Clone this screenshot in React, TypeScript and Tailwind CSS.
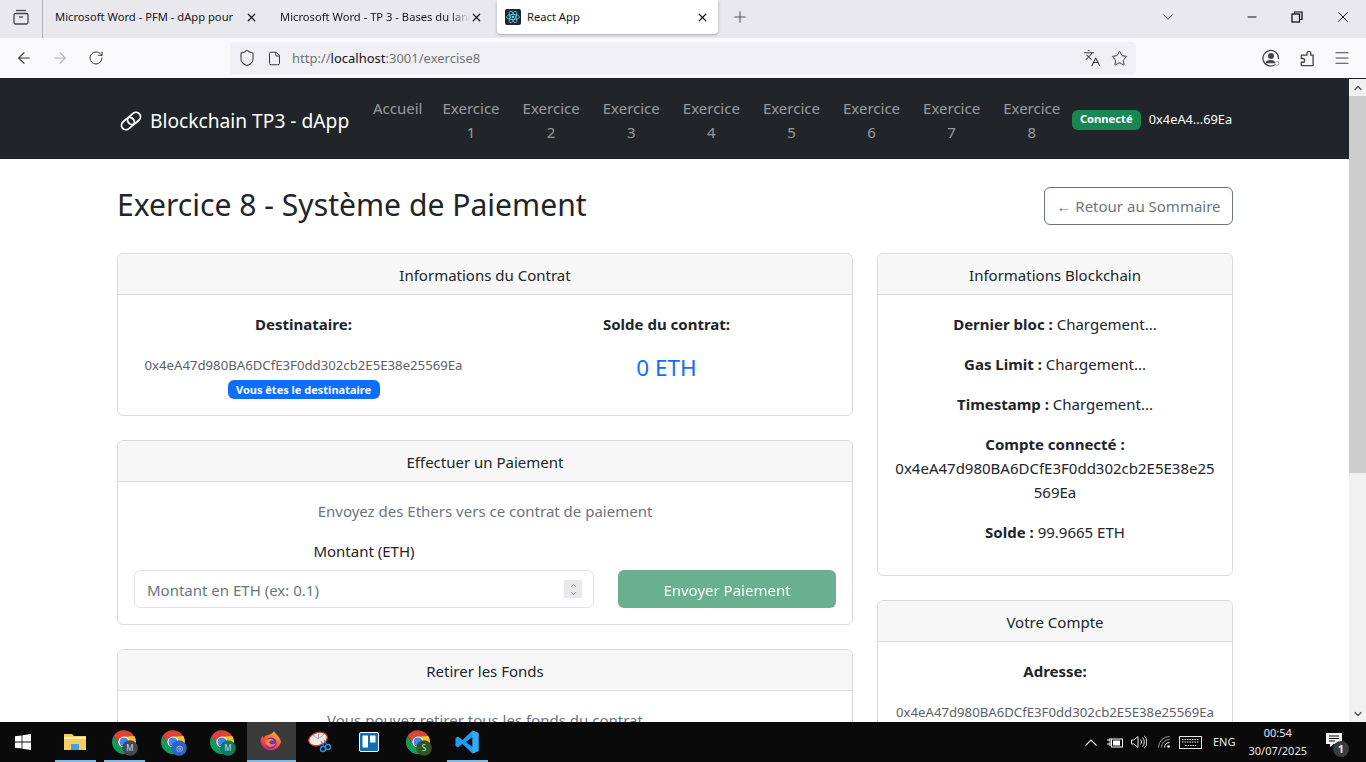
import React from "react";
import { ArrowLeft, ArrowRight, RotateCw, Shield, File, Languages, Star, Menu, X, Plus, ChevronDown, ChevronUp, Minus } from "lucide-react";

const font = "font-['Noto_Sans','Open_Sans',sans-serif]";

function BrowserTab({ title, fade }: { title: string; fade?: boolean }) {
  return (
    <div className="w-[225px] pl-[12px] pr-[10px] pb-[4px] flex items-center justify-between">
      <div className={`w-[190px] overflow-hidden whitespace-nowrap text-[11.2px] text-[#15141a] ${fade ? "[mask-image:linear-gradient(to_right,black_90%,transparent)]" : ""}`}>{title}</div>
      <X className="size-[13px] text-[#15141a] shrink-0" strokeWidth={2.2} />
    </div>
  );
}

function ReactFavicon() {
  return (
    <svg viewBox="0 0 16 16" className="size-4 shrink-0">
      <rect width="16" height="16" rx="2" fill="#20232a" />
      <g fill="none" stroke="#61dafb" strokeWidth="0.8">
        <ellipse cx="8" cy="8" rx="6.4" ry="2.6" />
        <ellipse cx="8" cy="8" rx="6.4" ry="2.6" transform="rotate(60 8 8)" />
        <ellipse cx="8" cy="8" rx="6.4" ry="2.6" transform="rotate(120 8 8)" />
      </g>
      <circle cx="8" cy="8" r="1.3" fill="#61dafb" />
    </svg>
  );
}

function BrowserChrome() {
  return (
    <div className="shrink-0">
      <div className="h-[38px] bg-[#e9e9ed] flex items-stretch">
        <div className="w-[43px] flex items-center justify-center border-r border-[#b0b0b4] pb-[4px]">
          <svg viewBox="0 0 16 16" className="size-4" fill="none" stroke="#45454a" strokeWidth="1.3">
            <path d="M3 1.500h10" />
            <rect x="1" y="4.500" width="14" height="10.500" rx="1.500" />
            <path d="M6 8h4" />
          </svg>
        </div>
        <BrowserTab title="Microsoft Word - PFM - dApp pour" />
        <BrowserTab title="Microsoft Word - TP 3 - Bases du langage" fade />
        <div className="w-[221px] ml-[4px] mb-[4px] bg-white rounded-b-[4px] shadow-[0_1px_3px_rgba(0,0,0,0.3)] flex items-center pl-[8px] pr-[9px]">
          <ReactFavicon />
          <span className="ml-[6px] text-[11.2px] text-[#15141a] flex-1">React App</span>
          <X className="size-[13px] text-[#15141a]" strokeWidth={2.2} />
        </div>
        <div className="w-[44px] pb-[4px] flex items-center justify-center">
          <Plus className="size-[18px] text-[#55555a]" strokeWidth={1.4} />
        </div>
        <div className="flex-1 flex items-center justify-end pb-[4px]">
          <ChevronDown className="size-[18px] text-[#45454a] mr-[52px]" strokeWidth={1.3} />
          <div className="w-[45px] flex justify-center"><Minus className="size-[14px] text-black" strokeWidth={1.6} /></div>
          <div className="w-[46px] flex justify-center">
            <svg viewBox="0 0 12 12" className="size-3" fill="none" stroke="#000" strokeWidth="1.2">
              <rect x="1" y="3" width="7.500" height="8" />
              <path d="M3.500 3V1H11V8.500H8.500" />
            </svg>
          </div>
          <div className="w-[46px] flex justify-center"><X className="size-[18px] text-black" strokeWidth={1.2} /></div>
        </div>
      </div>
      <div className="h-[40px] bg-[#f9f9fb] flex items-center border-b border-b-[#1f1f1f] box-content">
        <div className="w-[230px] flex items-center pl-[15px] gap-[18px] shrink-0">
          <ArrowLeft className="size-[18px] text-[#3a3a40]" strokeWidth={1.5} />
          <ArrowRight className="size-[18px] text-[#b4b4b8]" strokeWidth={1.5} />
          <RotateCw className="size-[16px] ml-[1px] text-[#3a3a40]" strokeWidth={1.5} />
        </div>
        <div className="w-[906px] h-[32px] rounded-[4px] bg-[#f0f0f4] flex items-center pl-[8px] pr-[8px] shrink-0">
          <Shield className="size-[18px] text-[#3a3a40]" strokeWidth={1.4} />
          <File className="size-[15px] ml-[11px] text-[#3a3a40]" strokeWidth={1.6} />
          <span className="ml-[10px] pt-[2px] text-[13px] text-[#737373] flex-1">
            http://<span className="text-[#15141a]">localhost</span>:3001/exercise8
          </span>
          <Languages className="size-[18px] text-[#3a3a40] mr-[10px]" strokeWidth={1.4} />
          <Star className="size-[17px] text-[#3a3a40]" strokeWidth={1.4} />
        </div>
        <div className="flex-1 flex items-center justify-end pr-[15px] gap-[18px]">
          <svg viewBox="0 0 18 18" className="size-[18px]" fill="none" stroke="#45454a" strokeWidth="1.3">
            <path d="M13 15.800A7.800 7.800 0 1 1 16.500 10" />
            <circle cx="9" cy="7" r="2.400" fill="#45454a" />
            <path d="M4.500 13.500c1-2.600 7-2.600 8 0z" fill="#45454a" />
            <circle cx="14.800" cy="14.500" r="2" stroke="#a8a8ac" strokeWidth="1" />
          </svg>
          <svg viewBox="0 0 18 18" className="size-[17px]" fill="none" stroke="#45454a" strokeWidth="1.4" strokeLinejoin="round">
            <path d="M7 5.500h2.500V3.500a2 2 0 0 1 4 0v2h2.500V16.500H3.500V13H5a2 2 0 0 0 0-4H3.500V5.500z" />
          </svg>
          <Menu className="size-[18px] text-[#45454a]" strokeWidth={1.4} />
        </div>
      </div>
    </div>
  );
}

function Navbar() {
  return (
    <div className="h-[80px] bg-[#212529] shrink-0 flex items-center pl-[119px]">
      <div className="w-[246px] pt-[5px] flex items-center gap-[7px] text-white text-[19.2px] shrink-0">
        <svg viewBox="0 0 24 24" className="size-[24px] shrink-0" fill="none" stroke="#fff" strokeWidth="1.800">
          <g transform="rotate(-40 12 12)">
            <rect x="1" y="7.500" width="14" height="9" rx="4.500" />
            <rect x="9" y="7.500" width="14" height="9" rx="4.500" />
          </g>
        </svg>
        <span>Blockchain TP3 - dApp</span>
      </div>
      <div className="flex items-start pt-[2px] text-[15px] leading-[24px] text-[rgba(255,255,255,0.55)]">
        <div className="px-[8px] py-[8px] w-[66px] mr-[4px]">Accueil</div>
        {[1, 2, 3, 4, 5, 6, 7, 8].map((n) => (
          <div key={n} className="px-[7px] py-[8px] text-center w-[72.100px] mr-[8px]">
            Exercice
            <div>{n}</div>
          </div>
        ))}
      </div>
      <span className="-ml-[4px] mt-[1px] bg-[#198754] text-white text-[11.200px] font-bold rounded-[6px] h-[20px] w-[69px] flex items-center justify-center">Connecté</span>
      <span className="ml-[8px] mt-[1px] text-white text-[12.800px]">0x4eA4...69Ea</span>
    </div>
  );
}

function Card({ title, children }: { title: string; children: React.ReactNode }) {
  return (
    <div className="border border-[#d9dadb] rounded-[6px] bg-white shrink-0">
      <div className="h-[39px] pt-[1px] bg-[#f7f7f7] border-b border-[#d9dadb] box-content rounded-t-[6px] flex items-center justify-center text-[15px] text-[#212529]">
        {title}
      </div>
      <div className="px-[16px] pt-[17px] pb-[16px]">{children}</div>
    </div>
  );
}

function Page() {
  return (
    <div className="flex-1 min-w-0 overflow-hidden bg-white">
      <Navbar />
      <div className="pl-[117px] pr-[116px] text-[#212529] text-[15px] leading-[24px]">
        <div className="h-[94px] flex items-center justify-between">
          <h1 className="text-[30.100px] leading-[38px] font-normal -mt-[2px]">Exercice 8 - Système de Paiement</h1>
          <button className="h-[38px] w-[189px] border border-[#6c757d] rounded-[6px] text-[#6c757d]">← Retour au Sommaire</button>
        </div>
        <div className="flex gap-[24px] items-start">
          <div className="w-[736px] shrink-0 flex flex-col gap-[24px]">
            <Card title="Informations du Contrat">
              <div className="-mx-[12px] grid grid-cols-2 text-center">
                <div className="flex flex-col items-center">
                  <strong className="font-bold">Destinataire:</strong>
                  <span className="mt-[19px] text-[13.200px] leading-[21px] text-[#5c6066]">0x4eA47d980BA6DCfE3F0dd302cb2E5E38e25569Ea</span>
                  <span className="mt-[4px] h-[19px] w-[152px] flex items-center justify-center rounded-[6px] bg-[#0d6efd] text-white text-[11px] font-bold leading-none">Vous êtes le destinataire</span>
                </div>
                <div>
                  <strong className="font-bold">Solde du contrat:</strong>
                  <div className="mt-[17px] text-[22.500px] leading-[29px] text-[#0d6efd]">0 ETH</div>
                </div>
              </div>
            </Card>
            <Card title="Effectuer un Paiement">
              <p className="text-center text-[#6c757d] mb-[16px]">Envoyez des Ethers vers ce contrat de paiement</p>
              <div className="grid grid-cols-[460px_218px] gap-x-[24px]">
                <div>
                  <label className="block text-center mb-[7px]">Montant (ETH)</label>
                  <div className="relative">
                    <input
                      placeholder="Montant en ETH (ex: 0.1)"
                      className="w-full h-[38px] pt-[1px] border border-[#dee2e6] rounded-[6px] px-[12px] placeholder:text-[#6c757d] outline-none"
                    />
                    <div className="absolute right-[12px] top-[10px] w-[18px] h-[18px] bg-[#e9e9ed] flex flex-col items-center justify-center">
                      <ChevronUp className="size-[9px] -mb-[1px] text-[#7a7a80]" strokeWidth={2.4} />
                      <ChevronDown className="size-[9px] text-[#7a7a80]" strokeWidth={2.4} />
                    </div>
                  </div>
                </div>
                <div className="flex items-end">
                  <button className="w-full h-[38px] pt-[1px] rounded-[6px] bg-[#198754] opacity-65 text-white">Envoyer Paiement</button>
                </div>
              </div>
            </Card>
            <Card title="Retirer les Fonds">
              <p className="text-center text-[#6c757d]">Vous pouvez retirer tous les fonds du contrat</p>
            </Card>
          </div>
          <div className="w-[356px] shrink-0 flex flex-col gap-[24px]">
            <Card title="Informations Blockchain">
              <div className="text-center">
                <p className="mb-[16px]"><strong>Dernier bloc :</strong> Chargement...</p>
                <p className="mb-[16px]"><strong>Gas Limit :</strong> Chargement...</p>
                <p className="mb-[16px]"><strong>Timestamp :</strong> Chargement...</p>
                <p className="mb-[16px] break-words">
                  <strong>Compte connecté :</strong>
                  <br />
                  0x4eA47d980BA6DCfE3F0dd302cb2E5E38e25569Ea
                </p>
                <p className="mb-[15px]"><strong>Solde :</strong> 99.9665 ETH</p>
              </div>
            </Card>
            <Card title="Votre Compte">
              <div className="text-center">
                <strong>Adresse:</strong>
                <div className="mt-[19px] text-[13.200px] leading-[21px] text-[#5c6066]">0x4eA47d980BA6DCfE3F0dd302cb2E5E38e25569Ea</div>
              </div>
            </Card>
          </div>
        </div>
      </div>
    </div>
  );
}

function Scrollbar() {
  return (
    <div className="w-[17px] shrink-0 bg-[#f1f1f1] flex flex-col items-center">
      <div className="h-[17px] flex items-center justify-center"><ChevronUp className="size-[12px] text-[#505050]" strokeWidth={2.5} /></div>
      <div className="h-[377px] w-full bg-[#cdcdcd]" />
      <div className="flex-1" />
      <div className="h-[17px] flex items-center justify-center"><ChevronDown className="size-[12px] text-[#505050]" strokeWidth={2.5} /></div>
    </div>
  );
}

function ChromeIcon({ badge, badgeText }: { badge: string; badgeText: string }) {
  return (
    <svg viewBox="0 0 28 28" className="size-[28px] overflow-visible">
      <path d="M14 8.600H24.390A12 12 0 0 0 3.610 8L9.300 16.700z" fill="#db4437" />
      <path d="M24.390 8A12 12 0 0 1 14 26L18.700 16.700 14 8.600z" fill="#fbc02d" />
      <path d="M14 26A12 12 0 0 1 3.610 8L9.300 16.700H18.700z" fill="#0f9d58" />
      <circle cx="14" cy="14" r="5.600" fill="#fff" />
      <circle cx="14" cy="14" r="4.500" fill="#4285f4" />
      <circle cx="20" cy="20" r="7.800" fill={badge} />
      <text x="20" y="23" textAnchor="middle" fontSize="8" fill="#cfd6da" fontFamily="Noto Sans, sans-serif">{badgeText}</text>
    </svg>
  );
}

function Taskbar() {
  return (
    <div className="h-[40px] bg-[#0a0a0a] shrink-0 flex items-stretch text-white">
      <div className="w-[50.500px] pr-[5px] flex items-center justify-center">
        <svg viewBox="0 0 16 16" className="size-4" fill="#fff">
          <path d="M0 2.300 6.600 1.400V7.600H0zM7.400 1.300 16 0V7.600H7.400zM0 8.400H6.600V14.600L0 13.700zM7.400 8.400H16V16L7.400 14.700z" />
        </svg>
      </div>
      <TaskItem active>
        <svg viewBox="0 0 22 20" className="w-[22px] h-[20px]">
          <path d="M0 2h8l2 2h12v14H0z" fill="#f5cd62" />
          <path d="M0 5h22v2H0z" fill="#fff2b5" />
          <path d="M7 12h8v6H7z" fill="#3aa5e0" />
        </svg>
      </TaskItem>
      <TaskItem active><ChromeIcon badge="#424b54" badgeText="M" /></TaskItem>
      <TaskItem><ChromeIcon badge="#2b66c4" badgeText="◎" /></TaskItem>
      <TaskItem><ChromeIcon badge="#0b7a6b" badgeText="M" /></TaskItem>
      <TaskItem active selected>
        <svg viewBox="0 0 24 24" className="size-[24px]">
          <defs>
            <linearGradient id="fx" x1="0.800" y1="0" x2="0.200" y2="1">
              <stop offset="0" stopColor="#ffbd2e" />
              <stop offset="0.500" stopColor="#ff5a36" />
              <stop offset="1" stopColor="#e3127e" />
            </linearGradient>
          </defs>
          <path d="M15 1c1 3 6 5 7 11A10.500 10.500 0 0 1 1.500 12c0-3 1-5 2-6l1 2c1-2 3-3 5-3 2-1 5-2 5.500-4z" fill="url(#fx)" />
          <circle cx="12" cy="13" r="5.500" fill="#6a34c4" />
          <path d="M6 11c2-2 7-3 9 0-2-1-4 0-5 1 1 3 5 3 7 1-1 3-5 5-8 3-2-1-3-3-3-5z" fill="#ff8a30" />
        </svg>
      </TaskItem>
      <TaskItem>
        <svg viewBox="0 0 24 24" className="size-[24px]">
          <ellipse cx="10" cy="9" rx="9.500" ry="6.500" transform="rotate(-18 10 9)" fill="#f3e6e6" stroke="#c33" strokeWidth="1.200" />
          <path d="M10 9 5 5M10 9l6-5M10 9l1-6" stroke="#999" strokeWidth="0.800" />
          <circle cx="15" cy="19" r="2.500" fill="none" stroke="#2f8fd6" strokeWidth="1.500" />
          <circle cx="20" cy="17" r="2.500" fill="none" stroke="#2f8fd6" strokeWidth="1.500" />
          <path d="M16 16.500 13 11M19 15l-3-5" stroke="#2f8fd6" strokeWidth="1.200" />
        </svg>
      </TaskItem>
      <TaskItem>
        <svg viewBox="0 0 20 20" className="size-[20px]">
          <rect x="0.500" y="0.500" width="19" height="19" rx="1.500" fill="#0a6fb5" stroke="#fff" />
          <rect x="3.500" y="3.500" width="5.500" height="12" rx="0.500" fill="#fff" />
          <rect x="11" y="3.500" width="5.500" height="7" rx="0.500" fill="#fff" />
        </svg>
      </TaskItem>
      <TaskItem><ChromeIcon badge="#33561f" badgeText="S" /></TaskItem>
      <TaskItem active>
        <svg viewBox="0 0 24 24" className="size-[24px]">
          <path d="M17.500 0.500 23.500 3v18l-6 2.500-10-9.500-4.500 3.500L0.500 16V8L3 6.500 7.500 10z" fill="#1f9cf0" />
          <path d="M17.500 7 11 12l6.500 5z" fill="#0a0a0a" />
          <path d="M17.500 0.500 23.500 3v18l-6 2.500z" fill="#37a9f4" />
        </svg>
      </TaskItem>
      <div className="flex-1 flex items-center justify-end text-[#e8e8e8]">
        <svg viewBox="0 0 12 7" className="w-[12px] h-[7px] mr-[10px]" fill="none" stroke="#e8e8e8" strokeWidth="1.100">
          <path d="M0.500 6.500 6 1l5.500 5.500" />
        </svg>
        <svg viewBox="0 0 16 11" className="w-[16px] h-[11px] mr-[8px]" fill="none" stroke="#fff">
          <path d="M0 3h3M0 7h3M3 1v8" />
          <rect x="4.500" y="2" width="11" height="8" />
          <rect x="6" y="3.500" width="7" height="5" fill="#fff" stroke="none" />
        </svg>
        <svg viewBox="0 0 16 14" className="w-[16px] h-[14px] mr-[11px]" fill="none" stroke="#e8e8e8" strokeWidth="1">
          <path d="M0.500 5H3L7 1.500V12.500L3 9H0.500z" />
          <path d="M9.500 4.500a3.500 3.500 0 0 1 0 5M11.500 2.500a6.500 6.500 0 0 1 0 9M13.500 0.800a9.500 9.500 0 0 1 0 12.400" />
        </svg>
        <svg viewBox="0 0 12 12" className="w-[12px] h-[12px] mr-[9px]" fill="none" stroke="#9a9a9a" strokeWidth="1">
          <path d="M0.500 11.500A11 11 0 0 1 11.500 0.500M3.500 11.500A8 8 0 0 1 11.500 3.500" />
          <path d="M6.500 11.500A5 5 0 0 1 11.500 6.500" stroke="#ffffff" />
          <circle cx="10.500" cy="10.500" r="1.300" fill="#ffffff" stroke="none" />
        </svg>
        <svg viewBox="0 0 23 13" className="w-[23px] h-[13px] mr-[11px]" fill="none" stroke="#e8e8e8" strokeWidth="1">
          <rect x="0.500" y="0.500" width="22" height="12" />
          <path d="M3 3.500h17M3 6h17M6 9.500h11" strokeDasharray="1.500 1" />
        </svg>
        <span className="text-[11px] mr-[13px]">ENG</span>
        <div className="text-[11px] leading-[18px] text-center mr-[19px]">
          <div>00:54</div>
          <div>30/07/2025</div>
        </div>
        <div className="relative mr-[24px] w-[16px] h-[14px] -mt-[4px]">
          <svg viewBox="0 0 16 14" className="w-[16px] h-[14px]">
            <path d="M0 0H16V11H7.500L4 14V11H0z" fill="#f4f4f4" />
            <path d="M3 3H13M3 5.500H13M3 8H9" stroke="#0a0a0a" strokeWidth="1" />
          </svg>
          <span className="absolute -right-[7px] -bottom-[10px] size-[16px] rounded-full bg-[#3c3c3c] text-[11px] font-bold leading-[16px] text-center">1</span>
        </div>
      </div>
    </div>
  );
}

function TaskItem({ children, active, selected }: { children: React.ReactNode; active?: boolean; selected?: boolean }) {
  return (
    <div className={`w-[49px] flex items-center justify-center relative ${selected ? "bg-[#3a3a3a]" : ""}`}>
      {children}
      {active && <div className={`absolute bottom-0 h-[2px] bg-[#76b9ed] ${selected ? "inset-x-0" : "inset-x-[4px]"}`} />}
    </div>
  );
}

export default function App() {
  return (
    <div className={`h-screen w-screen overflow-hidden flex flex-col ${font}`}>
      <BrowserChrome />
      <div className="flex-1 min-h-0 flex">
        <Page />
        <Scrollbar />
      </div>
      <Taskbar />
    </div>
  );
}
